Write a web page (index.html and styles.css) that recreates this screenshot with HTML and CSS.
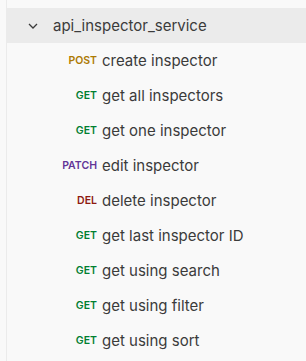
FILE: index.html
```html
<!DOCTYPE html>
<html lang="en">

<head>
    <meta charset="UTF-8">
    <meta name="viewport" content="width=device-width, initial-scale=1.0">
    <title>api_inspector_service</title>
    <link rel="stylesheet" href="styles.css">
</head>

<body>
    <div class="tree">
        <!-- Cartella -->
        <div class="folder">
            <svg class="chevron" width="10" height="6" viewBox="0 0 10 6">
                <path d="M1 1 L5 5 L9 1" fill="none" stroke="#3b3b3b" stroke-width="1.3" />
            </svg>
            <span class="folder-name">api_inspector_service</span>
        </div>

        <div class="request"><span class="method post">POST</span><span class="name">create inspector</span></div>
        <div class="request"><span class="method get">GET</span><span class="name">get all inspectors</span></div>
        <div class="request"><span class="method get">GET</span><span class="name">get one inspector</span></div>
        <div class="request"><span class="method patch">PATCH</span><span class="name">edit inspector</span></div>
        <div class="request"><span class="method del">DEL</span><span class="name">delete inspector</span></div>
        <div class="request"><span class="method get">GET</span><span class="name">get last inspector ID</span></div>
        <div class="request"><span class="method get">GET</span><span class="name">get using search</span></div>
        <div class="request"><span class="method get">GET</span><span class="name">get using filter</span></div>
        <div class="request"><span class="method get">GET</span><span class="name">get using sort</span></div>
    </div>
</body>

</html>
```

FILE: styles.css
```css
body {
    margin: 0;
    background-color: #f9f9f9;
    font-family: Inter, 'Noto Sans', sans-serif;
    color: #3b3b3b;
}

.tree {
    margin-left: 6px;
    padding-top: 8px;
    border-left: 1px solid #ebebeb;
    min-height: 100vh;
    box-sizing: border-box;
}

.folder {
    display: flex;
    align-items: center;
    height: 35px;
    background-color: #ebebeb;
    padding-left: 21px;
}

.chevron {
    margin-right: 15px;
}

.folder-name {
    font-size: 15px;
}

.request {
    display: flex;
    align-items: center;
    height: 35px;
}

.method {
    width: 90px;
    text-align: right;
    font-size: 10.5px;
    font-weight: 600;
    margin-right: 5px;
}

.name {
    font-size: 15px;
}

.post {
    color: #ad7a03;
}

.get {
    color: #007f31;
}

.patch {
    color: #623497;
}

.del {
    color: #8e1a10;
}
```
